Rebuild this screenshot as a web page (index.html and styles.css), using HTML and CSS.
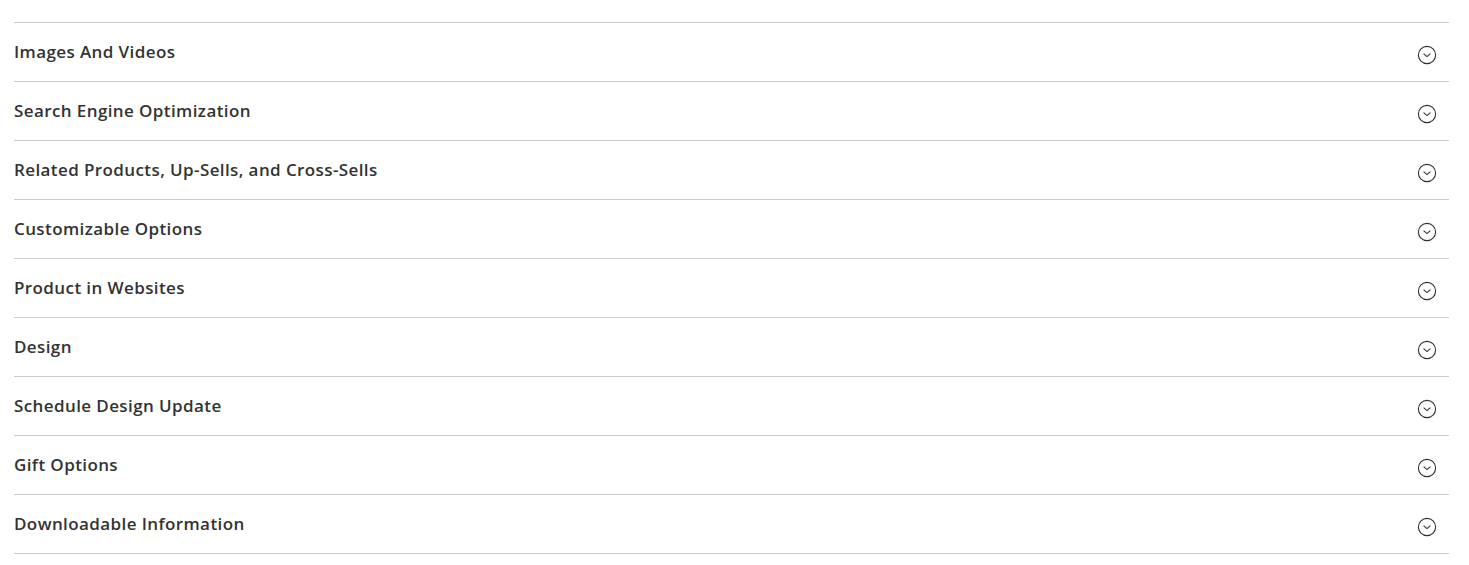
FILE: index.html
```html
<!DOCTYPE html>
<html lang="en">
<head>
  <meta charset="UTF-8">
  <title>Product Sections</title>
  <link rel="stylesheet" href="styles.css">
</head>
<body>
  <div class="sections">
    <div class="section"><span class="title">Images And Videos</span><svg class="toggle" viewBox="0 0 20 20"><circle cx="10" cy="10" r="8.6"/><path d="M6.6 8.6 L10 11.6 L13.4 8.6"/></svg></div>
    <div class="section"><span class="title">Search Engine Optimization</span><svg class="toggle" viewBox="0 0 20 20"><circle cx="10" cy="10" r="8.6"/><path d="M6.6 8.6 L10 11.6 L13.4 8.6"/></svg></div>
    <div class="section"><span class="title">Related Products, Up-Sells, and Cross-Sells</span><svg class="toggle" viewBox="0 0 20 20"><circle cx="10" cy="10" r="8.6"/><path d="M6.6 8.6 L10 11.6 L13.4 8.6"/></svg></div>
    <div class="section"><span class="title">Customizable Options</span><svg class="toggle" viewBox="0 0 20 20"><circle cx="10" cy="10" r="8.6"/><path d="M6.6 8.6 L10 11.6 L13.4 8.6"/></svg></div>
    <div class="section"><span class="title">Product in Websites</span><svg class="toggle" viewBox="0 0 20 20"><circle cx="10" cy="10" r="8.6"/><path d="M6.6 8.6 L10 11.6 L13.4 8.6"/></svg></div>
    <div class="section"><span class="title">Design</span><svg class="toggle" viewBox="0 0 20 20"><circle cx="10" cy="10" r="8.6"/><path d="M6.6 8.6 L10 11.6 L13.4 8.6"/></svg></div>
    <div class="section"><span class="title">Schedule Design Update</span><svg class="toggle" viewBox="0 0 20 20"><circle cx="10" cy="10" r="8.6"/><path d="M6.6 8.6 L10 11.6 L13.4 8.6"/></svg></div>
    <div class="section"><span class="title">Gift Options</span><svg class="toggle" viewBox="0 0 20 20"><circle cx="10" cy="10" r="8.6"/><path d="M6.6 8.6 L10 11.6 L13.4 8.6"/></svg></div>
    <div class="section"><span class="title">Downloadable Information</span><svg class="toggle" viewBox="0 0 20 20"><circle cx="10" cy="10" r="8.6"/><path d="M6.6 8.6 L10 11.6 L13.4 8.6"/></svg></div>
  </div>
</body>
</html>
```

FILE: styles.css
```css
* {
  margin: 0;
  padding: 0;
  box-sizing: border-box;
}

body {
  font-family: "Open Sans", Arial, sans-serif;
  background-color: #fff;
  color: #333;
}

.sections {
  margin: 22px 20px 0 14px;
  border-bottom: 1px solid #ccc;
}

.section {
  display: flex;
  align-items: center;
  justify-content: space-between;
  height: 59px;
  border-top: 1px solid #ccc;
  padding-right: 12px;
}

.title {
  font-size: 17px;
  font-weight: 600;
  letter-spacing: 0.4px;
  margin-top: -2px;
}

.toggle {
  width: 20px;
  height: 20px;
  margin-top: 6px;
  fill: none;
  stroke: #303030;
  stroke-width: 1.1;
}
```
